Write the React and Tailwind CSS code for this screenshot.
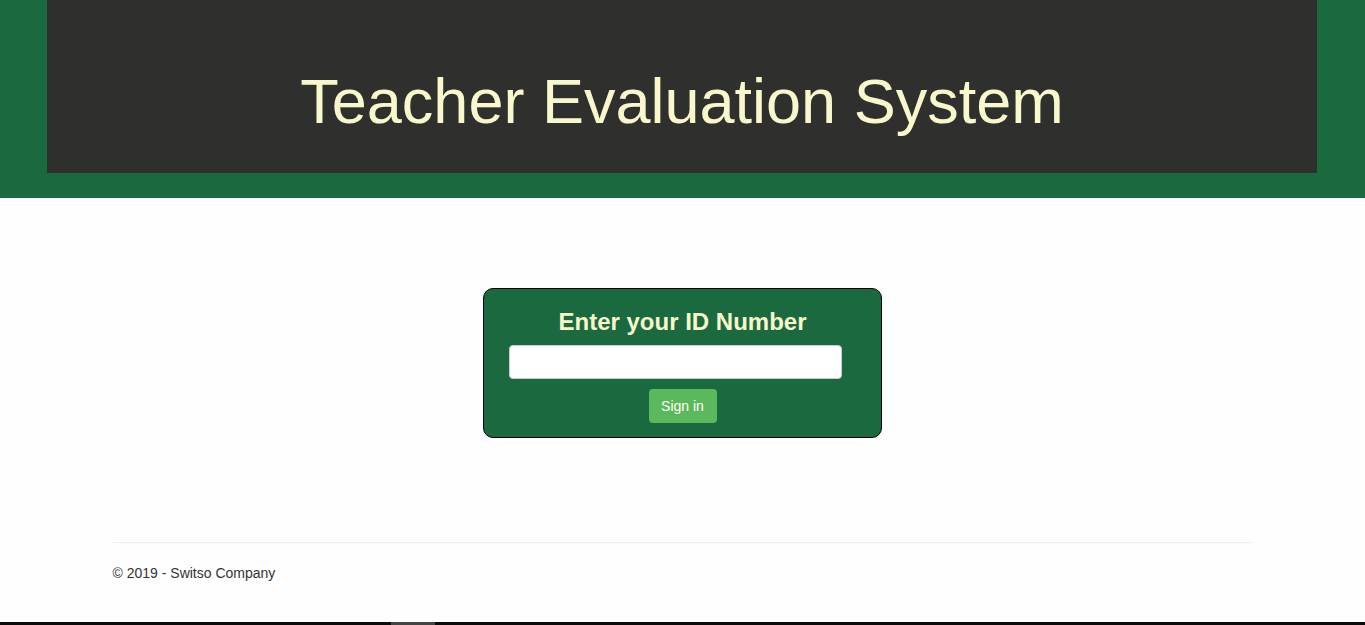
import React from 'react';

const App = () => {
  return (
    <div className="min-h-[625px] bg-[#fefefe] flex flex-col font-['Liberation_Sans',Arial,sans-serif] text-[#333]">
      <header className="bg-[#1b6a3f] pl-[47px] pr-[48px] pb-[25px]">
        <div className="bg-[#2f2f2e] h-[173px] flex items-center justify-center pt-[29px]">
          <h1 className="text-[63px] leading-none text-[#f8f8cc]">Teacher Evaluation System</h1>
        </div>
      </header>

      <main className="flex justify-center pt-[90px] pb-[104px]">
        <form
          className="w-[399px] h-[150px] bg-[#1b6a3f] border border-black rounded-[10px] flex flex-col items-center pt-[19px]"
          onSubmit={(e) => e.preventDefault()}
        >
          <h2 className="text-[24px] leading-[28px] font-bold text-[#f8f8cc]">Enter your ID Number</h2>
          <input
            type="text"
            className="mt-[9px] self-start ml-[25px] w-[333px] h-[34px] bg-white border border-[#ccc] rounded-[4px] px-3 text-sm outline-none"
          />
          <button
            type="submit"
            className="mt-[10px] w-[68px] h-[34px] bg-[#5cb85c] rounded-[4px] text-white text-[14px]"
          >
            Sign in
          </button>
        </form>
      </main>

      <footer className="w-[1140px] mx-auto border-t border-[#eee] pt-[20px]">
        <p className="text-[14px] leading-[20px]">© 2019 - Switso Company</p>
      </footer>

      <div className="mt-auto h-[3px] bg-[#0b0b0b] flex">
        <div className="ml-[391px] w-[44px] bg-[#444]" />
      </div>
    </div>
  );
};

export default App;
